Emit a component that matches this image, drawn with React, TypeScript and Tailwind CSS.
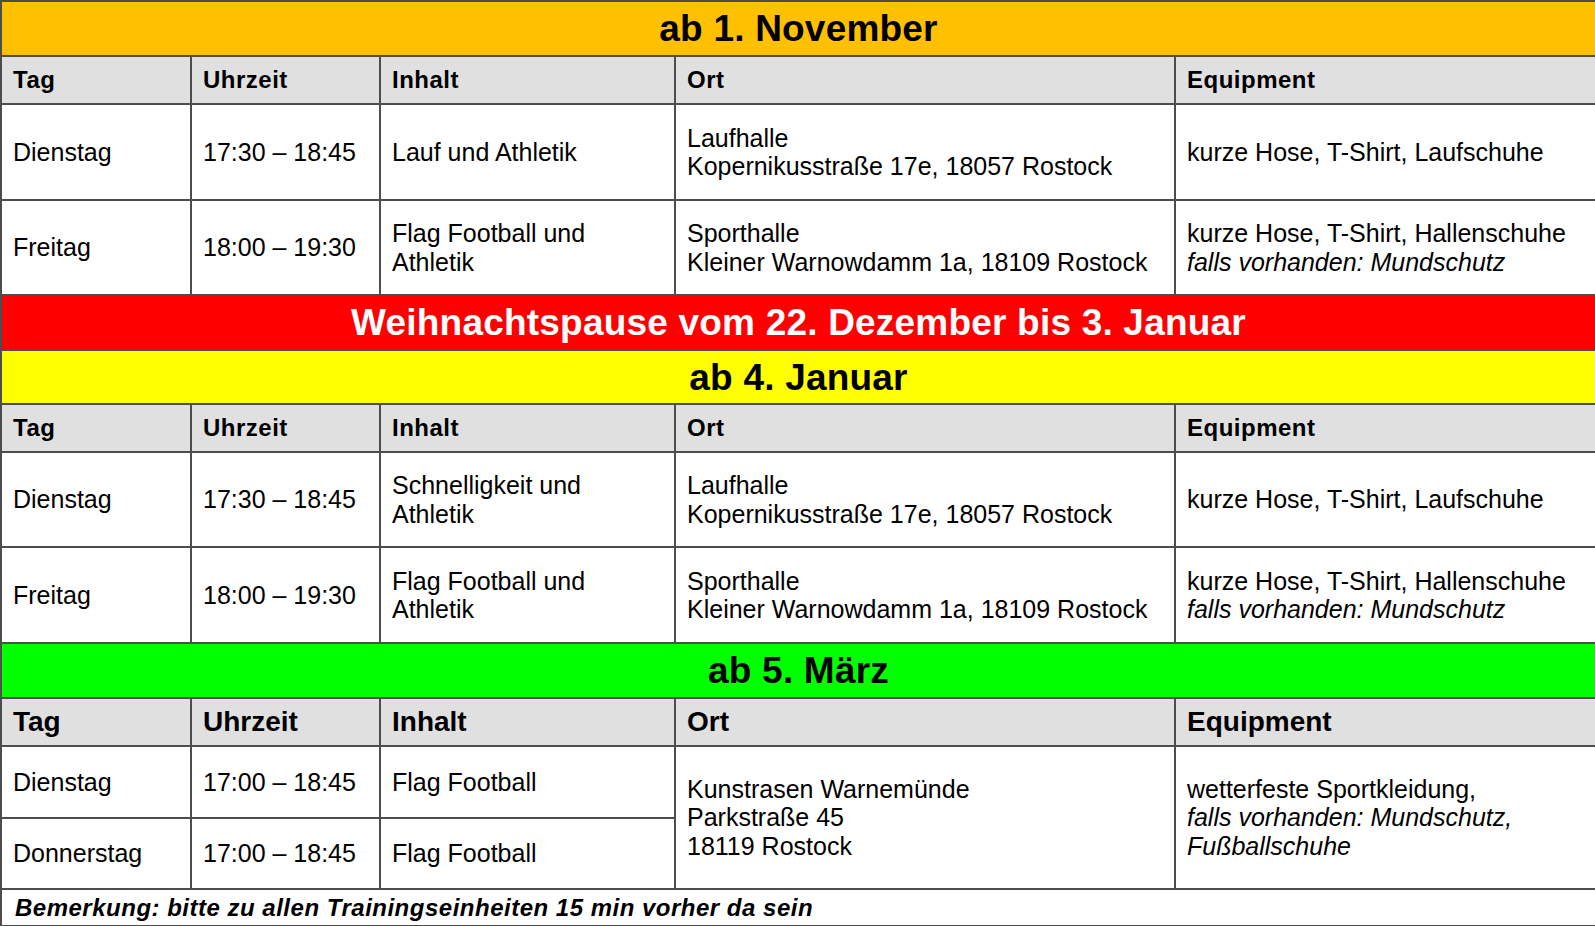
const font = { fontFamily: '"Liberation Sans", Arial, sans-serif' };

type Row = {
  day: string;
  time: string;
  content: string[];
  place: string[];
  equip: string[];
  equipItalic?: string[];
  h: string;
};

function Banner({ text, bg, color = "text-black", h }: { text: string; bg: string; color?: string; h: string }) {
  return (
    <tr className={h}>
      <td colSpan={5} className={`${bg} ${color} border-2 border-[#4d4d4d] text-center text-[37px] font-bold tracking-[0.2px] leading-none`}>
        {text}
      </td>
    </tr>
  );
}

function Header({ big }: { big?: boolean }) {
  const cls = `border-2 border-[#4d4d4d] bg-[#e0e0e0] px-[11px] text-left font-bold ${big ? "text-[28px]" : "text-[24px] tracking-[0.5px]"}`;
  return (
    <tr className="h-[48px]">
      <th className={cls}>Tag</th>
      <th className={cls}>Uhrzeit</th>
      <th className={cls}>Inhalt</th>
      <th className={cls}>Ort</th>
      <th className={cls}>Equipment</th>
    </tr>
  );
}

const cell = "border-2 border-[#4d4d4d] bg-white px-[11px] align-middle text-[25px] leading-[28.5px]";

function Lines({ lines, italic }: { lines: string[]; italic?: string[] }) {
  return (
    <>
      {lines.map((l) => (
        <div key={l}>{l}</div>
      ))}
      {italic?.map((l) => (
        <div key={l} className="italic">
          {l}
        </div>
      ))}
    </>
  );
}

function Body({ rows }: { rows: Row[] }) {
  return (
    <>
      {rows.map((r) => (
        <tr key={r.day + r.content[0]} className={r.h}>
          <td className={cell}>{r.day}</td>
          <td className={cell}>{r.time}</td>
          <td className={cell}>
            <Lines lines={r.content} />
          </td>
          <td className={cell}>
            <Lines lines={r.place} />
          </td>
          <td className={cell}>
            <Lines lines={r.equip} italic={r.equipItalic} />
          </td>
        </tr>
      ))}
    </>
  );
}

const november: Row[] = [
  {
    day: "Dienstag",
    time: "17:30 – 18:45",
    content: ["Lauf und Athletik"],
    place: ["Laufhalle", "Kopernikusstraße 17e, 18057 Rostock"],
    equip: ["kurze Hose, T-Shirt, Laufschuhe"],
    h: "h-[96px]",
  },
  {
    day: "Freitag",
    time: "18:00 – 19:30",
    content: ["Flag Football und", "Athletik"],
    place: ["Sporthalle", "Kleiner Warnowdamm 1a, 18109 Rostock"],
    equip: ["kurze Hose, T-Shirt, Hallenschuhe"],
    equipItalic: ["falls vorhanden: Mundschutz"],
    h: "h-[95px]",
  },
];

const januar: Row[] = [
  {
    day: "Dienstag",
    time: "17:30 – 18:45",
    content: ["Schnelligkeit und", "Athletik"],
    place: ["Laufhalle", "Kopernikusstraße 17e, 18057 Rostock"],
    equip: ["kurze Hose, T-Shirt, Laufschuhe"],
    h: "h-[95px]",
  },
  {
    day: "Freitag",
    time: "18:00 – 19:30",
    content: ["Flag Football und", "Athletik"],
    place: ["Sporthalle", "Kleiner Warnowdamm 1a, 18109 Rostock"],
    equip: ["kurze Hose, T-Shirt, Hallenschuhe"],
    equipItalic: ["falls vorhanden: Mundschutz"],
    h: "h-[96px]",
  },
];

export default function App() {
  return (
    <div className="w-[1595px] h-[926px] bg-white text-black" style={font}>
      <table className="w-[1595px] table-fixed border-collapse">
        <colgroup>
          <col className="w-[190px]" />
          <col className="w-[189px]" />
          <col className="w-[295px]" />
          <col className="w-[500px]" />
          <col className="w-[421px]" />
        </colgroup>
        <tbody>
          <Banner text="ab 1. November" bg="bg-[#ffc000]" h="h-[55px]" />
          <Header />
          <Body rows={november} />
          <Banner text="Weihnachtspause vom 22. Dezember bis 3. Januar" bg="bg-[#ff0000]" color="text-white" h="h-[55px]" />
          <Banner text="ab 4. Januar" bg="bg-[#ffff00]" h="h-[54px]" />
          <Header />
          <Body rows={januar} />
          <Banner text="ab 5. März" bg="bg-[#00ff00]" h="h-[55px]" />
          <Header big />
          <tr className="h-[72px]">
            <td className={cell}>Dienstag</td>
            <td className={cell}>17:00 – 18:45</td>
            <td className={cell}>Flag Football</td>
            <td className={cell} rowSpan={2}>
              <Lines lines={["Kunstrasen Warnemünde", "Parkstraße 45", "18119 Rostock"]} />
            </td>
            <td className={cell} rowSpan={2}>
              <Lines lines={["wetterfeste Sportkleidung,"]} italic={["falls vorhanden: Mundschutz,", "Fußballschuhe"]} />
            </td>
          </tr>
          <tr className="h-[71px]">
            <td className={cell}>Donnerstag</td>
            <td className={cell}>17:00 – 18:45</td>
            <td className={cell}>Flag Football</td>
          </tr>
          <tr className="h-[37px]">
            <td colSpan={5} className="border-2 border-[#4d4d4d] bg-white px-[13px] text-[24px] font-bold italic leading-none tracking-[0.5px]">
              Bemerkung: bitte zu allen Trainingseinheiten 15 min vorher da sein
            </td>
          </tr>
        </tbody>
      </table>
    </div>
  );
}
